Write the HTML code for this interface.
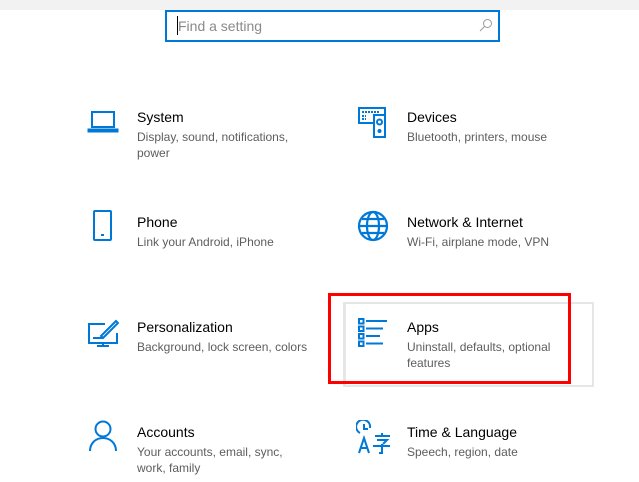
<!DOCTYPE html>
<html><head><style>
body{margin:0;width:639px;height:482px;background:#fff;font-family:"Liberation Sans","Noto Sans CJK SC",sans-serif;position:relative;overflow:hidden}
.top{position:absolute;left:0;top:0;width:639px;height:10px;background:#f2f2f2}
.search{position:absolute;left:165px;top:10px;width:331px;height:28px;border:2px solid #0078d7;background:#fff}
.search .ph{position:absolute;left:11px;top:6px;font-size:14px;color:#8a8a8a}
.search .cur{position:absolute;left:10px;top:4px;width:1px;height:19px;background:#000}
.t{position:absolute;font-size:14px;color:#000;white-space:nowrap}
.s{position:absolute;font-size:12px;color:#5d5d5d;line-height:16px;width:170px}
svg{position:absolute}
</style></head><body>
<div class="top"></div>
<div class="search"><div class="cur"></div><div class="ph">Find a setting</div>
<svg style="left:312px;top:6px" width="14" height="14" viewBox="0 0 14 14"><circle cx="8.5" cy="5.5" r="4" fill="none" stroke="#999" stroke-width="1"/><line x1="5.5" y1="8.5" x2="1" y2="13" stroke="#999"/></svg></div>

<div style="position:absolute;left:343px;top:302px;width:246px;height:81px;border:2px solid #e6e6e6;border-left-width:3px"></div>
<div style="position:absolute;left:328px;top:293px;width:237px;height:85px;border:3px solid #f00"></div>

<svg style="left:87px;top:110px" width="32" height="24" viewBox="0 0 32 24" fill="none" stroke="#0078d7" stroke-width="2"><rect x="5" y="2" width="22" height="15"/><path d="M1.5 19.5h29v2h-29z"/></svg>
<div class="t" style="left:137px;top:109px">System</div>
<div class="s" style="left:137px;top:129px">Display, sound, notifications, power</div>

<svg style="left:357px;top:106px" width="34" height="32" viewBox="0 0 34 32" fill="none" stroke="#0078d7" stroke-width="2"><path d="M17 17H2V2h26v7"/><rect x="17" y="9" width="11" height="22"/><circle cx="22.5" cy="16" r="2.5"/><circle cx="22.5" cy="25" r="1"/><path d="M5 6h18M5 10h4M5 13h4" stroke-dasharray="2 1"/></svg>
<div class="t" style="left:407px;top:109px">Devices</div>
<div class="s" style="left:407px;top:129px">Bluetooth, printers, mouse</div>

<svg style="left:93px;top:210px" width="20" height="32" viewBox="0 0 20 32" fill="none" stroke="#0078d7" stroke-width="2"><rect x="1" y="1" width="17" height="29" rx="1"/><path d="M8 25h3"/></svg>
<div class="t" style="left:137px;top:214px">Phone</div>
<div class="s" style="left:137px;top:234px;width:200px">Link your Android, iPhone</div>

<svg style="left:357px;top:210px" width="32" height="32" viewBox="0 0 32 32" fill="none" stroke="#0078d7" stroke-width="2.2"><circle cx="16" cy="16" r="14"/><ellipse cx="16" cy="16" rx="6" ry="14"/><path d="M2 16h28M5 9h22M5 23h22"/></svg>
<div class="t" style="left:407px;top:214px">Network &amp; Internet</div>
<div class="s" style="left:407px;top:234px;width:200px">Wi-Fi, airplane mode, VPN</div>

<svg style="left:87px;top:319px" width="32" height="30" viewBox="0 0 32 30" fill="none" stroke="#0078d7" stroke-width="2"><path d="M18 5H2v19h28v-10"/><path d="M10 27h12M16 24v3"/><path d="M29 2l-12 12-3 3 2 2 3-3 12-12z"/><path d="M6 19h10"/></svg>
<div class="t" style="left:137px;top:319px">Personalization</div>
<div class="s" style="left:137px;top:339px;width:200px">Background, lock screen, colors</div>

<svg style="left:357px;top:317px" width="32" height="30" viewBox="0 0 32 30" fill="none" stroke="#0078d7" stroke-width="2"><rect x="2" y="2" width="4.5" height="4.5"/><rect x="2" y="9.5" width="4.5" height="4.5"/><rect x="2" y="17" width="4.5" height="4.5"/><rect x="2" y="24.5" width="4.5" height="4.5"/><path d="M9 4h21M9 11.5h17M9 19h14M9 26.5h17"/></svg>
<div class="t" style="left:407px;top:319px">Apps</div>
<div class="s" style="left:407px;top:339px;width:160px">Uninstall, defaults, optional features</div>

<svg style="left:88px;top:420px" width="30" height="32" viewBox="0 0 30 32" fill="none" stroke="#0078d7" stroke-width="2"><circle cx="15" cy="9" r="7.5"/><path d="M2 31c0-8 6-13 13-13s13 5 13 13"/></svg>
<div class="t" style="left:137px;top:424px">Accounts</div>
<div class="s" style="left:137px;top:444px;width:170px">Your accounts, email, sync, work, family</div>

<svg style="left:356px;top:420px" width="36" height="34" viewBox="0 0 36 34" fill="none" stroke="#0078d7" stroke-width="2"><path d="M14 8A7 7 0 1 0 4 13"/><path d="M8 4v5h4"/><path d="M3 33l5-15 5 15M5 28h6"/><path d="M19 16h15M26 13v3M21 20h10l-4 4M17 26h17M26 24v9h-3"/></svg>
<div class="t" style="left:407px;top:424px">Time &amp; Language</div>
<div class="s" style="left:407px;top:444px;width:200px">Speech, region, date</div>
</body></html>
